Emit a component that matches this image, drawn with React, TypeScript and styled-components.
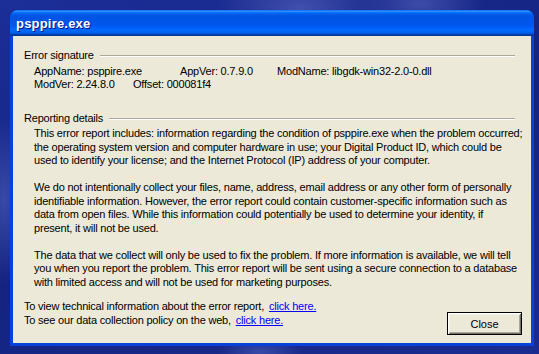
import styled, { createGlobalStyle } from "styled-components";

const GlobalStyle = createGlobalStyle`
  html, body {
    margin: 0;
    padding: 0;
    width: 539px;
    height: 354px;
    overflow: hidden;
  }
  body {
    background:
      radial-gradient(ellipse 120px 60px at 300px 8px, rgba(140, 150, 230, 0.35), transparent 70%),
      radial-gradient(ellipse 90px 40px at 420px 4px, rgba(150, 160, 240, 0.3), transparent 70%),
      radial-gradient(ellipse 40px 120px at 4px 200px, rgba(120, 140, 230, 0.35), transparent 70%),
      radial-gradient(ellipse 60px 20px at 260px 352px, rgba(120, 140, 230, 0.35), transparent 70%),
      linear-gradient(160deg, #1c2e98 0%, #14237f 50%, #1a2c90 100%);
    font-family: Tahoma, "Liberation Sans", Arial, sans-serif;
  }
`;

const Desktop = styled.div`
  padding: 10px 5px 8px 10px;
`;

const Window = styled.div`
  width: 524px;
  height: 336px;
  display: flex;
  flex-direction: column;
  border-radius: 8px 8px 0 0;
  background: #0842d8;
  box-sizing: border-box;
  overflow: hidden;
`;

const TitleBar = styled.div`
  height: 26px;
  flex: none;
  display: flex;
  align-items: center;
  padding-left: 6px;
  background: linear-gradient(
    to bottom,
    #0058ee 0%,
    #3593ff 4%,
    #288eff 6%,
    #127dff 8%,
    #036ffc 10%,
    #0262ee 14%,
    #0057e5 20%,
    #0054e3 24%,
    #0055eb 56%,
    #005bf5 66%,
    #026afe 76%,
    #0062ef 86%,
    #0052d6 92%,
    #0040ab 94%,
    #003092 100%
  );
`;

const Title = styled.span`
  font-family: "Liberation Sans", Arial, sans-serif;
  font-weight: bold;
  font-size: 13px;
  color: #fff;
  text-shadow: 1px 1px #0f1089;
  letter-spacing: 0.2px;
`;

const Client = styled.div`
  flex: 1;
  margin: 0 3px 3px 3px;
  background: #ece9d8;
  padding: 12px 9px 7px 11px;
  display: flex;
  flex-direction: column;
  font-family: "Liberation Sans", Arial, sans-serif;
  font-size: 11px;
  letter-spacing: -0.2px;
  color: #000;
  white-space: nowrap;
`;

const GroupHeader = styled.div<{ $top?: number }>`
  display: flex;
  align-items: center;
  gap: 6px;
  height: 14px;
  line-height: 14px;
  margin-top: ${(p) => p.$top ?? 0}px;
  margin-right: 7px;
`;

const Rule = styled.div`
  flex: 1;
  height: 0;
  border-top: 1px solid #aca899;
  border-bottom: 1px solid #fff;
  margin-top: 1px;
`;

const SigBlock = styled.div`
  padding: 3px 0 0 10px;
`;

const SigRow = styled.div`
  display: flex;
  height: 12.5px;
  line-height: 12.5px;
`;

const SigField = styled.span<{ $w?: number }>`
  width: ${(p) => (p.$w ? `${p.$w}px` : "auto")};
  flex: none;
`;

const Details = styled.div`
  padding: 2px 0 0 10px;
  line-height: 13.5px;
`;

const Para = styled.p`
  margin: 0 0 13.5px 0;
  &:last-child {
    margin-bottom: 0;
  }
`;

const Footer = styled.div`
  display: flex;
  justify-content: space-between;
  align-items: flex-start;
  margin-top: 10px;
`;

const Links = styled.div`
  line-height: 14px;
`;

const Link = styled.a`
  color: #0000ff;
  text-decoration: underline;
  cursor: pointer;
  margin-left: 2px;
`;

const Button = styled.button`
  width: 75px;
  height: 23px;
  margin-top: 13px;
  font-family: inherit;
  font-size: 11px;
  color: #000;
  background: #ece9d8;
  border: 1px solid #000;
  box-shadow: inset 1px 1px #fff, inset -1px -1px #716f64, inset 2px 2px #f1efe2,
    inset -2px -2px #aca899;
  padding: 0;
`;

export default function App() {
  return (
    <>
      <GlobalStyle />
      <Desktop>
        <Window>
          <TitleBar>
            <Title>psppire.exe</Title>
          </TitleBar>
          <Client>
            <GroupHeader>
              <span>Error signature</span>
              <Rule />
            </GroupHeader>
            <SigBlock>
              <SigRow>
                <SigField $w={146}>AppName: psppire.exe</SigField>
                <SigField $w={97}>AppVer: 0.7.9.0</SigField>
                <SigField>ModName: libgdk-win32-2.0-0.dll</SigField>
              </SigRow>
              <SigRow>
                <SigField $w={99}>ModVer: 2.24.8.0</SigField>
                <SigField>Offset: 000081f4</SigField>
              </SigRow>
            </SigBlock>
            <GroupHeader $top={21}>
              <span>Reporting details</span>
              <Rule />
            </GroupHeader>
            <Details>
              <Para>
                This error report includes: information regarding the condition of psppire.exe when the problem occurred;
                <br />
                the operating system version and computer hardware in use; your Digital Product ID, which could be
                <br />
                used to identify your license; and the Internet Protocol (IP) address of your computer.
              </Para>
              <Para>
                We do not intentionally collect your files, name, address, email address or any other form of personally
                <br />
                identifiable information. However, the error report could contain customer-specific information such as
                <br />
                data from open files. While this information could potentially be used to determine your identity, if
                <br />
                present, it will not be used.
              </Para>
              <Para>
                The data that we collect will only be used to fix the problem. If more information is available, we will tell
                <br />
                you when you report the problem. This error report will be sent using a secure connection to a database
                <br />
                with limited access and will not be used for marketing purposes.
              </Para>
            </Details>
            <Footer>
              <Links>
                <div>
                  To view technical information about the error report, <Link>click here.</Link>
                </div>
                <div>
                  To see our data collection policy on the web, <Link>click here.</Link>
                </div>
              </Links>
              <Button>Close</Button>
            </Footer>
          </Client>
        </Window>
      </Desktop>
    </>
  );
}
